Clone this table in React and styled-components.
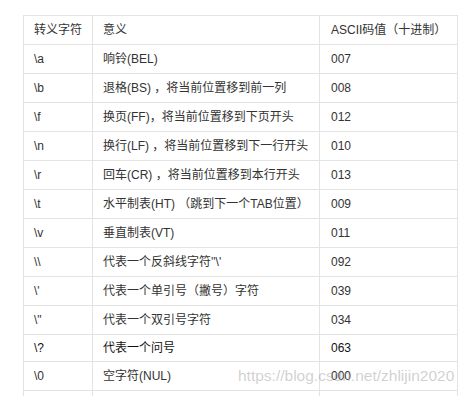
import styled, { createGlobalStyle } from "styled-components"

const Global = createGlobalStyle`
    html, body {
        margin: 0;
        padding: 0;
        background: #fff;
    }
    body {
        font-family: "Liberation Sans", "Noto Sans CJK SC", sans-serif;
        font-size: 12px;
        color: #333;
    }
`

const Pagina = styled.div`
    position: relative;
    width: 470px;
    height: 396px;
    overflow: hidden;
    padding: 15px 0 0 23px;
    box-sizing: border-box;
`

const Tabela = styled.table`
    border-collapse: collapse;
    table-layout: fixed;
    width: 434px;
`

const Celula = styled.td`
    border: 1px solid #e3e3e3;
    height: ${p => (p.$baixa ? 26 : 28)}px;
    padding: 0 0 0 ${p => (p.$col === 2 ? 11 : 10)}px;
    vertical-align: middle;
    white-space: nowrap;
    color: ${p => (p.$escuro ? "#111" : "#333")};
    line-height: 14px;
`

// marca d'agua do blog por cima da tabela
const Marca = styled.div`
    position: absolute;
    left: 238px;
    top: 367px;
    font-size: 15.5px;
    color: rgba(150, 150, 150, 0.45);
    white-space: nowrap;
`

const linhas = [
    ["\\a", "响铃(BEL)", "007"],
    ["\\b", "退格(BS) ，将当前位置移到前一列", "008"],
    ["\\f", "换页(FF)，将当前位置移到下页开头", "012"],
    ["\\n", "换行(LF) ，将当前位置移到下一行开头", "010"],
    ["\\r", "回车(CR) ，将当前位置移到本行开头", "013"],
    ["\\t", "水平制表(HT) （跳到下一个TAB位置）", "009"],
    ["\\v", "垂直制表(VT)", "011"],
    ["\\\\", "代表一个反斜线字符''\\'", "092"],
    ["\\'", "代表一个单引号（撇号）字符", "039"],
    ["\\\"", "代表一个双引号字符", "034"],
    ["\\?", "代表一个问号", "063", true],
    ["\\0", "空字符(NUL)", "000"],
    ["", "", ""],
]

function App() {
    return (
        <Pagina>
            <Global />
            <Tabela>
                <colgroup>
                    <col style={{ width: 69 }} />
                    <col style={{ width: 227 }} />
                    <col style={{ width: 138 }} />
                </colgroup>
                <tbody>
                    <tr>
                        <Celula>转义字符</Celula>
                        <Celula>意义</Celula>
                        <Celula $col={2}>ASCII码值（十进制）</Celula>
                    </tr>
                    {linhas.map(([esc, sig, cod, escuro], i) => (
                        <tr key={i}>
                            <Celula $baixa={escuro} $escuro={escuro}>{esc}</Celula>
                            <Celula $baixa={escuro} $escuro={escuro}>{sig}</Celula>
                            <Celula $baixa={escuro} $escuro={escuro} $col={2}>{cod}</Celula>
                        </tr>
                    ))}
                </tbody>
            </Tabela>
            <Marca>https://blog.csdn.net/zhlijin2020</Marca>
        </Pagina>
    )
}

export default App
